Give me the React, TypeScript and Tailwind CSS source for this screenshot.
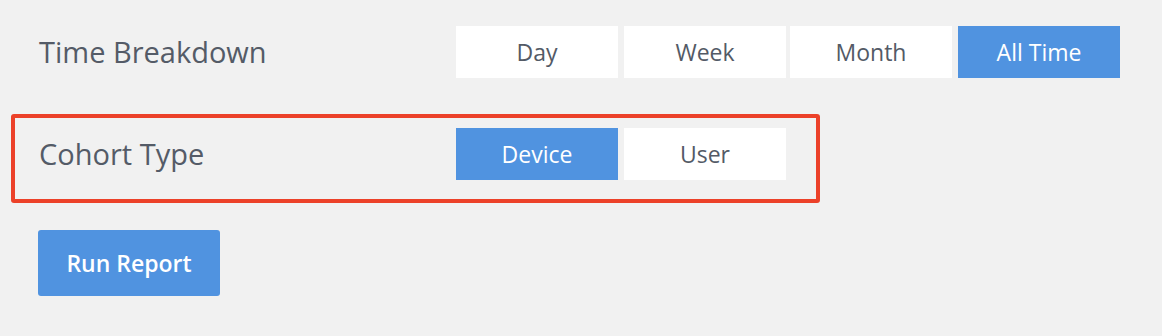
const timeOptions = ["Day", "Week", "Month", "All Time"];
const cohortOptions = ["Device", "User"];

function Segmented({ options, active }: { options: string[]; active: string }) {
  return (
    <div className="flex gap-[6px]">
      {options.map((opt) => (
        <button
          key={opt}
          className={
            (opt === active
              ? "w-[162px] h-[52px] bg-[#5093e0] text-white text-[23px]"
              : "w-[162px] h-[52px] bg-white text-[#535a66] text-[23px]") +
            (opt === "Month" ? " -ml-[2px]" : "")
          }
        >
          {opt}
        </button>
      ))}
    </div>
  );
}

export default function App() {
  return (
    <div
      className="w-[1162px] h-[336px] bg-[#f1f1f1] pt-[26px]"
      style={{ fontFamily: '"Open Sans", "Liberation Sans", sans-serif' }}
    >
      <div className="flex items-center pl-[39px]">
        <div className="w-[417px] text-[29px] text-[#545b67]">Time Breakdown</div>
        <Segmented options={timeOptions} active="All Time" />
      </div>

      {/* highlighted row */}
      <div className="mt-[36px] ml-[11px] w-[809px] h-[89px] border-4 border-[#ec4129] rounded-[3px] pl-[24px] pt-[10px]">
        <div className="flex items-center">
          <div className="w-[417px] text-[29px] text-[#545b67]">Cohort Type</div>
          <Segmented options={cohortOptions} active="Device" />
        </div>
      </div>

      <div className="mt-[27px] pl-[38px]">
        <button className="w-[182px] h-[66px] rounded-[3px] bg-[#5093e0] text-white text-[23px] font-semibold">
          Run Report
        </button>
      </div>
    </div>
  );
}
